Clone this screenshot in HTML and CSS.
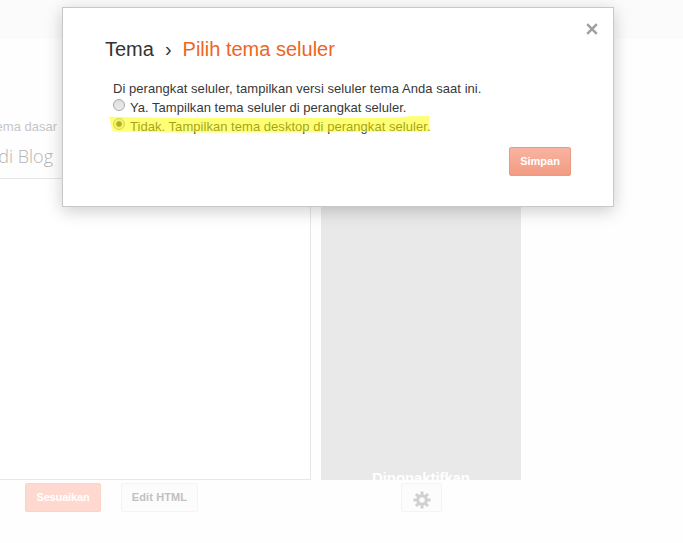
FILE: index.html
```html
<!DOCTYPE html>
<html lang="id">
<head>
<meta charset="utf-8">
<title>Tema</title>
<link rel="stylesheet" href="styles.css">
</head>
<body>
<div class="page">
  <header class="topbar"></header>
  <main class="content">
    <p class="base-theme"><span>ema dasar</span></p>
    <h2 class="blog-title"><span>di Blog</span></h2>
    <div class="previews">
      <div class="preview-desktop"></div>
      <div class="preview-mobile"><span>Dinonaktifkan</span></div>
    </div>
    <div class="actions">
      <button class="btn btn-primary">Sesuaikan</button>
      <button class="btn btn-plain">Edit HTML</button>
      <button class="btn btn-plain btn-gear" aria-label="Setelan">
        <svg width="18" height="18" viewBox="-9 -9 18 18">
          <g fill="#d0d0d0">
            <rect x="-1.5" y="-8.5" width="3" height="17"/>
            <rect x="-1.5" y="-8.5" width="3" height="17" transform="rotate(45)"/>
            <rect x="-1.5" y="-8.5" width="3" height="17" transform="rotate(90)"/>
            <rect x="-1.5" y="-8.5" width="3" height="17" transform="rotate(135)"/>
            <circle r="5.8"/>
          </g>
          <circle r="2.8" fill="#fbfbfb"/>
        </svg>
      </button>
    </div>
  </main>
</div>
<section class="dialog" role="dialog">
  <svg class="close" width="12" height="12" viewBox="0 0 12 12"><path d="M1.2 1.2l9.6 9.6M10.8 1.2l-9.6 9.6" stroke="#a0a0a0" stroke-width="2.5"/></svg>
  <h1 class="title"><span>Tema</span><span class="sep">›</span><span class="current">Pilih tema seluler</span></h1>
  <div class="options">
    <p class="line intro">Di perangkat seluler, tampilkan versi seluler tema Anda saat ini.</p>
    <label class="line yes"><span class="radio"></span><span>Ya. Tampilkan tema seluler di perangkat seluler.</span></label>
    <label class="line no"><span class="radio checked"></span><span>Tidak. Tampilkan tema desktop di perangkat seluler.</span>
      <svg class="marker" width="324" height="18" viewBox="0 0 324 18"><path d="M1 2Q0 .8 2 .8L60 1.8 240 2Q285 2.5 300 .3L321 0V15.5L180 16.5H70L6 15.5Q3 13 3 8Z" fill="#ff0" fill-opacity=".54"/></svg>
    </label>
  </div>
  <div class="footer"><button class="btn btn-save">Simpan</button></div>
</section>
</body>
</html>
```
FILE: styles.css
```css
* { box-sizing: border-box; }
body {
  margin: 0;
  height: 543px;
  overflow: hidden;
  background: #fefefe;
  font: 13px/19px "Liberation Sans", Arial, sans-serif;
  color: #383838;
}
h1, h2, p { margin: 0; font-weight: normal; }
.topbar { height: 39px; background: #fbfbfb; }
.base-theme, .blog-title {
  display: flex;
  justify-content: flex-end;
  color: #c6c6c6;
}
.base-theme { width: 57px; margin-top: 78px; white-space: nowrap; }
.blog-title {
  width: 53px;
  height: 41px;
  padding-top: 7px;
  font: 300 18px/26px "Open Sans", sans-serif;
  color: #b4b4b4;
  white-space: nowrap;
}
.previews { display: flex; gap: 10px; height: 303px; margin-top: 1px; }
.preview-desktop {
  width: 311px;
  height: 302px;
  border: solid #e6e6e6;
  border-width: 1px 1px 1px 0;
  background: #fff;
}
.preview-mobile {
  width: 200px;
  height: 302px;
  padding-top: 291px;
  overflow: hidden;
  background: #e9e9e9;
  color: #fff;
  font: bold 15px/18px "Liberation Sans", sans-serif;
  letter-spacing: -.1px;
  text-align: center;
}
.actions { display: flex; padding: 2px 0 0 25px; }
.btn {
  height: 29px;
  padding: 0;
  border: 1px solid;
  border-radius: 2px;
  font: bold 11px/27px "Liberation Sans", sans-serif;
}
.btn-primary { width: 76px; background: #ffd9cf; border-color: #fcd3c8; color: #fff; letter-spacing: -.15px; }
.btn-plain { width: 77px; margin-left: 20px; background: #fcfcfc; border-color: #f4f4f4; color: #c1c1c1; letter-spacing: .1px; }
.btn-gear { display: flex; align-items: center; justify-content: center; width: 41px; margin-left: 203px; padding-top: 4px; }
.dialog {
  position: absolute;
  left: 62px;
  top: 7px;
  width: 552px;
  height: 200px;
  padding: 28px 42px 0;
  background: #fff;
  border: 1px solid #c8c8c8;
  box-shadow: 0 4px 16px rgba(0, 0, 0, .2);
}
.close { position: absolute; right: 15px; top: 15px; }
.title { display: flex; font-size: 20px; line-height: 26px; color: #333; }
.sep { margin: 0 11px 0 11px; }
.current { color: #ee651e; }
.options { padding: 17px 0 0 8px; }
.line { position: relative; display: flex; height: 19px; white-space: nowrap; }
.intro { letter-spacing: .055px; }
.yes { letter-spacing: .035px; }
.no { letter-spacing: .04px; }
.radio {
  width: 12px;
  height: 12px;
  margin: 1px 5px 0 0;
  border: 1px solid #a9a9a9;
  border-radius: 50%;
  background: linear-gradient(#dedede, #ececec);
}
.checked { background: radial-gradient(circle, #555 0 2.3px, #e6e6e6 3.3px); }
.marker { position: absolute; left: -5px; top: -1px; }
.footer { display: flex; justify-content: flex-end; padding: 11px 0 0; }
.btn-save { width: 62px; background: linear-gradient(#f8b4a1, #f29b82); border-color: #e99a84; color: #fff; }
```
